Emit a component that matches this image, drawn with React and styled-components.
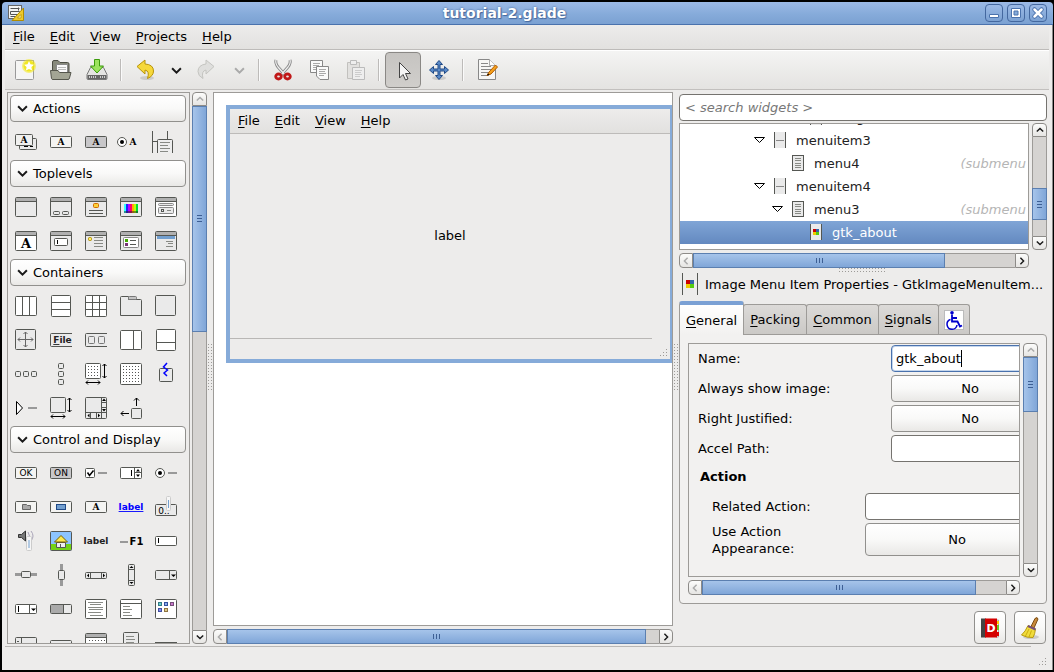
import React from 'react'
import styled, { createGlobalStyle, css } from 'styled-components';

const line = '#555753';
const face = '#eaeaea';

const Box = ({ x = 0.5, y = 1.5, w = 21, h = 19, fill = face, stroke = line, r = 1 }) => (
  <rect x={x} y={y} width={w} height={h} rx={r} fill={fill} stroke={stroke} />
)

const Win = ({ fill = face, children }) => (
  <>
    <Box fill={fill} />
    <path d='M1 3.5H21' stroke='#b0b0b0' strokeWidth='3' />
    <path d='M1 5.5H21' stroke={line} />
    {children}
  </>
)

const Lines = ({ d, stroke = '#888a85' }) => <path d={d} stroke={stroke} fill='none' />

const Word = ({ x = 11, y, size = 9, fill = '#000', serif, children, ...rest }) => (
  <text
    x={x}
    y={y}
    textAnchor='middle'
    fontFamily={serif ? '"DejaVu Serif", serif' : '"DejaVu Sans", sans-serif'}
    fontWeight='bold'
    fontSize={size}
    fill={fill}
    {...rest}>
    {children}
  </text>
)

const Pill = ({ fill = '#f4f4f2', children }) => (
  <>
    <Box y={5.5} h={11} fill={fill} />
    {children}
  </>
)

const Dots = ({ x, y, w, h }) => {
  const dots = [];
  for (let i = 0; i < w; i += 3) {
    for (let j = 0; j < h; j += 3) {
      dots.push(<rect key={i + '-' + j} x={x + i} y={y + j} width='1' height='1' fill='#555' />)
    }
  }
  return dots;
}

const squares = (list) => list.map(([x, y, w, h, fill]) => (
  <rect key={x + '-' + y} x={x} y={y} width={w} height={h} fill={fill} />
))

const groups = [
  {
    name: 'Actions',
    items: [
      ['Action Group', <><Box x={4.5} y={7.5} w={17} h={11} /><Lines d='M9 15.5h4M15 15.5h3' stroke='#000' /><Box y={3.5} w={17} h={11} fill='#f0f0ef' /><Word x={9} y={12} serif>A</Word></>],
      ['Action', <Pill><Word y={14} serif>A</Word></Pill>],
      ['Toggle Action', <Pill fill='#c8c7c9'><Word y={14} serif>A</Word></Pill>],
      ['Radio Action', <><circle cx='2' cy='11' r='4.5' fill='#fff' stroke={line} /><circle cx='2' cy='11' r='2' fill='#000' /><Word x={13} y={14} serif>A</Word></>],
      ['Recent Action', <><path d='M-2.500 0V22M12.500 0V8M-2 10.500H2' stroke={line} fill='none' /><path d='M2.500 22V9.500Q2.500 8.500 3.500 8.500H16.500Q17.500 8.500 17.500 9.500V22' fill='#eee' stroke={line} /><Lines d='M5 11.500h10M5 14.500h8M5 17.500h10M5 20.500h8' /></>],
    ],
  },
  {
    name: 'Toplevels',
    items: [
      ['Window', <Win />],
      ['Dialog', <Win><Box x={3.5} y={15.5} w={6} h={3} /><Box x={12.5} y={15.5} w={6} h={3} /></Win>],
      ['About Dialog', <Win><Box x={8.5} y={7.5} w={5} h={4} fill='#fcd23c' stroke='#d36b00' /><Lines d='M4 14.500h14M4 17.500h14' stroke={line} /></Win>],
      ['Color Dialog', <Win>{squares([[4, 8, 2, 9, '#3ff'], [6, 8, 2, 9, '#22f'], [8, 8, 2, 9, '#b0f'], [10, 8, 2, 9, '#f06'], [12, 8, 2, 9, '#fa0'], [14, 8, 2, 9, '#bf0'], [16, 8, 2, 9, '#0d3']])}<path d='M4 15h14v2H4z' fill='#222' fillOpacity='.5' /></Win>],
      ['File Dialog', <Win fill='#fff'><Box x={3.5} y={7.5} w={15} h={2} stroke='#888' /><Box x={3.5} y={11.5} w={15} h={6} stroke='#888' /><Box x={6.5} y={13.5} w={2} h={2} r={0} /><Lines d='M12 14.500h4' /></Win>],
      ['Font Dialog', <Win fill='#fff'><Word y={18} size={13} serif>A</Word></Win>],
      ['Input Dialog', <Win><Box x={4.5} y={8.5} w={13} h={7} fill='#fff' /><path d='M7.500 10v4' stroke='#000' /></Win>],
      ['Message Dialog', <Win><Box x={3.5} y={7.5} w={3} h={3} fill='#fe6' stroke='#b08c00' /><Lines d='M9 7.500h9M9 10.500h9M9 13.500h9M9 16.500h9' /></Win>],
      ['Recent Dialog', <Win><Box x={3.5} y={7.5} w={15} h={10} fill='#fff' stroke='#888' /><rect x='5' y='9' width='3' height='3' fill='#4a0' /><rect x='5' y='13' width='3' height='3' fill='#737' /><Lines d='M10 10.500h6M10 14.500h6' stroke={line} /></Win>],
      ['Assistant', <Win><rect x='2' y='6' width='18' height='3' fill='#729fcf' /><Lines d='M11 11.500h7M13 13.500h5M11 16.500h7' /></Win>],
    ],
  },
  {
    name: 'Containers',
    items: [
      ['Horizontal Box', <><Box fill='#fff' /><Lines d='M7.500 2V20M14.500 2V20' stroke={line} /></>],
      ['Vertical Box', <><Box x={1.5} y={0.5} w={19} h={21} fill='#fff' /><Lines d='M2 7.500H20M2 14.500H20' stroke={line} /></>],
      ['Table', <><Box y={0.5} h={21} fill='#fff' /><Lines d='M7.500 1V21M14.500 1V21M1 7.500H21M1 14.500H21' stroke={line} /></>],
      ['Notebook', <><path d='M.5 20.500V2.500Q.5 1.500 1.500 1.500H8.500V4.500H20.500Q21.500 4.500 21.500 5.500V20.500Z' fill={face} stroke={line} /><Box x={8.5} y={1.5} w={8} h={3} fill='#c4c4c4' stroke='#777' /></>],
      ['Frame', <Box y={0.5} w={20} h={20} />],
      ['Layout', <><Box w={20} y={0.5} h={20} /><path d='M10.500 3V18M3 10.500H18M8.500 5l2-2 2 2M8.500 16l2 2 2-2M5 8.500l-2 2 2 2M16 8.500l2 2-2 2' fill='none' stroke='#666' /></>],
      ['Menu Bar', <><path d='M22 4.500H1.500Q.5 4.500 .5 5.500V16.500Q.5 17.500 1.500 17.500H22' fill={face} stroke={line} /><Word x={12.5} y={14} size={9} fill='#222'><tspan textDecoration='underline'>F</tspan>ile</Word></>],
      ['Toolbar', <><path d='M22 4.500H1.500Q.5 4.500 .5 5.500V16.500Q.5 17.500 1.500 17.500H22' fill={face} stroke={line} /><Box x={3.5} y={7.5} w={6} h={7} stroke='#777' /><Box x={13.5} y={7.5} w={6} h={7} stroke='#777' /></>],
      ['Horizontal Panes', <><Box fill='#fff' /><Lines d='M13.500 2V20' stroke={line} /></>],
      ['Vertical Panes', <><Box x={1.5} y={0.5} w={19} h={21} fill='#fff' /><Lines d='M2 13.500H20' stroke={line} /></>],
      ['Horizontal Button Box', <><Box x={0.5} y={8.5} w={5} h={5} /><Box x={8.5} y={8.5} w={5} h={5} /><Box x={16.5} y={8.5} w={5} h={5} /></>],
      ['Vertical Button Box', <><Box x={8.5} y={0.5} w={5} h={5} /><Box x={8.5} y={8.5} w={5} h={5} /><Box x={8.5} y={16.5} w={5} h={5} /></>],
      ['Scrolled Layout', <><Box y={0.5} w={15} h={15} fill='#fff' /><Dots x={3} y={3} w={11} h={11} /><path d='M19.500 1V15M17.500 3l2-2 2 2M17.500 13l2 2 2-2M1 19.500H15M3 17.500l-2 2 2 2M13 17.500l2 2-2 2' fill='none' stroke='#000' /></>],
      ['Fixed', <><Box y={0.5} h={21} fill='#fff' /><Dots x={3} y={3} w={17} h={17} /></>],
      ['Event Box', <><Box x={4.5} y={5.5} w={13} h={13} /><path d='M12 0l-3.500 4 4 3-3.500 3 3 3' fill='none' stroke='#00f' strokeWidth='1.5' /></>],
      ['Expander', <><path d='M1.500 4.500V17.500L7.500 11Z' fill='#fff' stroke='#000' /><path d='M13 11h9' stroke='#999' strokeWidth='2' /></>],
      ['Viewport', <><Box y={0.5} w={15} h={15} /><path d='M19.500 1V15M17.500 3l2-2 2 2M17.500 13l2 2 2-2M1 19.500H15M3 17.500l-2 2 2 2M13 17.500l2 2-2 2' fill='none' stroke='#000' /></>],
      ['Scrolled Window', <><Box y={0.5} h={21} /><Lines d='M16.500 1V21M1 15.500H21M16 5.500h5M16 10.500h5M5.500 16v5M11.500 16v5' stroke={line} /><path d='M17 4h4l-2-2.500zM17 12h4l-2 2.500zM4.500 16.500v4l-2-2zM13 16.500v4l2-2z' fill='#000' /></>],
      ['Alignment', <><Box x={11.5} y={11.5} w={10} h={10} /><path d='M16.500 9V1M14 3.500l2.500-2.500 2.500 2.500M9 16.500H1M3.500 14l-2.500 2.500 2.500 2.500' fill='none' stroke='#000' /></>],
    ],
  },
  {
    name: 'Control and Display',
    items: [
      ['Button', <Pill><Word y={14} size={9} fontWeight='normal'>OK</Word></Pill>],
      ['Toggle Button', <Pill fill='#c8c7c9'><Word y={14} size={9} fontWeight='normal'>ON</Word></Pill>],
      ['Check Button', <><Box y={6.5} w={9} h={9} fill='#fff' /><path d='M2.500 10.500l2 3 4-5' fill='none' stroke='#000' strokeWidth='1.5' /><path d='M13 11h9' stroke='#999' strokeWidth='2' /></>],
      ['Spin Button', <><Box y={5.5} h={11} fill='#fff' /><path d='M11.500 8v6' stroke='#000' /><Lines d='M14.500 6v10M15 10.500h6' stroke={line} /><path d='M16 9.500h4l-2-2.500zM16 12.500h4l-2 2.500z' fill='#000' /></>],
      ['Radio Button', <><circle cx='5' cy='11' r='4.5' fill='#fff' stroke={line} /><circle cx='5' cy='11' r='2' fill='#000' /><path d='M13 11h9' stroke='#999' strokeWidth='2' /></>],
      ['File Chooser Button', <Pill><path d='M7.500 13.500V8.500h4l1 1h3v4z' fill='#aaa' stroke='#666' /></Pill>],
      ['Color Button', <Pill><Box x={6.5} y={8.5} w={9} h={5} r={0} fill='#729fcf' stroke='#204a87' /></Pill>],
      ['Font Button', <Pill><Word y={14} serif>A</Word></Pill>],
      ['Link Button', <Word y={14} size={9} fill='#00f' textDecoration='underline'>label</Word>],
      ['Scale Button', <><Box y={8.5} h={11} /><Word x={9} y={18} size={9} fontWeight='normal'>0..</Word><Box x={11.5} y={0.5} w={4} h={14} fill='#f6f6f6' stroke='#ccc' /><path d='M13.500 4v8' stroke='#729fcf' /></>],
      ['Volume Button', <><path d='M3.500 4.500h3l4-3.500v10l-4-3.500h-3z' fill='#777' stroke='#333' /><path d='M13 2q3 4 0 8M16 1q4 5 0 10' fill='none' stroke='#a9a4b8' /><Box x={11.5} y={6.5} w={5} h={14} fill='#f6f6f6' stroke='#ccc' /><path d='M14 10v8' stroke='#729fcf' /></>],
      ['Image', <><Box fill='#8cc4ff' h={19} /><path d='M1 14H21V20H1z' fill='#73d216' /><path d='M6.500 12.500h9v5h-9z' fill='#eee' stroke={line} /><path d='M4.500 12L11 5.500 17.500 12z' fill='#fce94f' stroke='#776000' /><path d='M10.500 14v4' stroke={line} /></>],
      ['Label', <Word y={14} size={9} fill='#222'>label</Word>],
      ['Accelerator Label', <><path d='M0 12h8' stroke='#999' strokeWidth='2' /><Word x={16.5} y={15} size={10}>F1</Word></>],
      ['Text Entry', <><Box y={6.5} h={9} fill='#fff' /><path d='M3.500 8v5' stroke='#000' /></>],
      ['Horizontal Scale', <><path d='M0 10.500h22' stroke='#999' strokeWidth='3' /><Box x={6.5} y={7.5} w={9} h={6} /></>],
      ['Vertical Scale', <><path d='M11.500 0v22' stroke='#999' strokeWidth='3' /><Box x={8.5} y={6.5} w={6} h={9} /></>],
      ['Horizontal Scrollbar', <><Box y={8.5} h={6} /><Lines d='M5.500 9v6M16.500 9v6' stroke={line} /><path d='M4 9.500v4l-2-2zM18 9.500v4l2-2z' fill='#000' /></>],
      ['Vertical Scrollbar', <><Box x={8.5} y={0.5} w={6} h={21} /><Lines d='M9 5.500h6M9 16.500h6' stroke={line} /><path d='M9.500 4h4l-2-2zM9.500 18h4l-2 2z' fill='#000' /></>],
      ['Combo Box', <><Box y={6.5} h={9} /><Lines d='M14.500 7v9' stroke={line} /><path d='M16 10.500h5l-2.500 2.500z' fill='#000' /></>],
      ['Combo Box Entry', <><Box y={6.5} h={9} fill='#fff' /><path d='M3.500 8v6' stroke='#000' /><Lines d='M14.500 7v9' stroke={line} /><path d='M16 10.500h5l-2.500 2.500z' fill='#000' /></>],
      ['Progress Bar', <><Box y={6.5} h={9} /><path d='M1 7h12v8H1z' fill='#aaa' /><Lines d='M13.500 7v9' stroke={line} /></>],
      ['Text View', <><Box fill='#fff' /><Lines d='M3 4.500h15M5 6.500h11M3 9.500h15M4 11.500h14M3 14.500h13M5 17.500h13' /></>],
      ['Tree View', <><Box fill='#fff' /><Lines d='M1 5.500h20' stroke={line} /><Lines d='M3 8.500h7M3 11.500h9M3 14.500h7M3 17.500h9' /></>],
      ['Icon View', <><Box fill='#fff' />{squares([[3, 4, 4, 4, '#367c85'], [9, 4, 4, 4, '#34509c'], [15, 4, 4, 4, '#75507b'], [3, 10, 4, 4, '#4150a0'], [9, 10, 4, 4, '#8f7341'], [4, 5, 2, 2, '#6cc'], [10, 5, 2, 2, '#8ae'], [16, 5, 2, 2, '#c7c'], [4, 11, 2, 2, '#88e'], [10, 11, 2, 2, '#dc8']])}</>],
      ['Handle Box', <><Box y={5.5} h={16} /><Lines d='M6.500 6v16M2 9.500h2' stroke={line} /></>],
      ['Status Bar', <Box y={8.5} h={13} />],
      ['Calendar', <><Win fill='#fff' /><Dots x={4} y={8} w={16} h={12} /></>],
      ['Popup Menu', <><Box x={3.5} y={0.5} w={15} h={22} /><Lines d='M6 4.500h8M6 7.500h9M6 10.500h8' /></>],
      ['Separator', <path d='M0 10.500h22' stroke={line} />],
    ],
  },
];

const tree = [
  { name: 'imagemenuitem5', depth: 3, icon: 'image' },
  { name: 'menuitem3', depth: 1, icon: 'item', open: true },
  { name: 'menu4', depth: 2, icon: 'menu', note: '(submenu' },
  { name: 'menuitem4', depth: 1, icon: 'item', open: true },
  { name: 'menu3', depth: 2, icon: 'menu', open: true, note: '(submenu' },
  { name: 'gtk_about', depth: 3, icon: 'image', selected: true },
];

function TreeIcon({ type }) {
  return (
    <svg width='12' height='16' viewBox='0 0 12 16' shapeRendering='crispEdges'>
      {type === 'menu'
        ? <>
          <Box w={11} y={0.5} h={15} />
          <Lines d='M3 3.500h6M3 5.500h6M3 8.500h6M3 10.500h6M3 12.500h6' />
        </>
        : <>
          <rect width='12' height='16' fill={face} />
          <path d='M.5 0v16M11.500 0v16' stroke={line} />
          {type === 'item' && <path d='M2 8h8' stroke='#888' />}
          {type === 'image' && squares([[3, 5, 3, 3, '#c00'], [6, 5, 3, 3, '#36a'], [3, 8, 3, 3, '#ec0'], [6, 8, 3, 3, '#5c1']])}
        </>}
    </svg>
  )
}

const arrows = {
  up: 'M1 7l4-4 4 4',
  down: 'M1 3l4 4 4-4',
  left: 'M7 1L3 5l4 4',
  right: 'M3 1l4 4-4 4',
};

const Arrow = ({ dir, dim, size = 8 }) => (
  <svg width={size} height={size} viewBox='0 0 10 10'>
    <path d={arrows[dir]} fill='none' stroke={dim ? '#aaa' : '#1a1a1a'} strokeWidth='1.8' />
  </svg>
)

function Scrollbar({ vertical, before = 0, thumb, after, atStart }) {
  return (
    <Bar $vertical={vertical}>
      <BarButton $vertical={vertical} $first aria-label={vertical ? 'Scroll up' : 'Scroll left'}>
        <Arrow dir={vertical ? 'up' : 'left'} dim={atStart} />
      </BarButton>
      <Trough $vertical={vertical} $grow={before} />
      <Thumb $vertical={vertical} $grow={thumb}><i /><i /><i /></Thumb>
      <Trough $vertical={vertical} $grow={after} />
      <BarButton $vertical={vertical} aria-label={vertical ? 'Scroll down' : 'Scroll right'}>
        <Arrow dir={vertical ? 'down' : 'right'} />
      </BarButton>
    </Bar>
  )
}

const tools = {
  New: <><path d='M2.500 3.500Q2.500 2.500 3.500 2.500H20.500V20.500Q20.500 21.500 19.500 21.500H3.500Q2.500 21.500 2.500 20.500Z' fill='#f5f5f4' stroke='#999' /><circle cx='16' cy='8' r='7' fill='#f4ea1a' fillOpacity='.55' /><circle cx='16' cy='8' r='5.500' fill='#f0e400' fillOpacity='.7' /><path d='M16 3l1.500 3.300 3.500.4-2.600 2.400.7 3.500L16 10.900l-3.100 1.700.7-3.500L11 6.700l3.500-.4z' fill='#fff' /></>,
  Open: <><path d='M3.500 19V4Q3.500 2.500 5 2.500H9L11 4.500H18.500Q20 4.500 20 6V19' fill='#888a7c' stroke='#4c4d44' /><path d='M7.500 6.500H18.500V17H7.500z' fill='#fafafa' stroke='#888' /><path d='M9 9.500h8M9 11.500h8' stroke='#bbb' /><path d='M1.500 12.500H9L10.500 14.500H22L20.500 20Q20.300 21.500 19 21.500H4Q2.800 21.500 2.500 20.500Z' fill='#a3a594' stroke='#55564c' /></>,
  Save: <><path d='M5.500 9.500H18.500L22 16.500V20.500Q22 21.500 21 21.500H3Q2 21.500 2 20.500V16.500Z' fill='#e4e4e2' stroke='#777' /><path d='M2.500 17H21.500V21H2.500z' fill='#666' /><path d='M4 19h8M15 19h5' stroke='#ccc' strokeDasharray='1 1' strokeWidth='2' /><path d='M9.500 1.500H14.500V8H18.500L12 15 5.500 8H9.500Z' fill='#9be35c' stroke='#3b9a0a' /></>,
  Undo: <><ellipse cx='14' cy='20' rx='7' ry='2' fill='#000' fillOpacity='.12' /><path d='M4 8.500L12 2V6Q20.500 6.500 20.500 13 20.500 18 14.500 20.500 17 13 12 12V16Z' fill='#f6d83a' stroke='#b8930a' /></>,
  Redo: <><path d='M18 8.500L10 2V6Q2 7 2 13.500 2 18 7 20.500 5 13 10 12V16Z' fill='#dfdfdd' stroke='#c4c4c0' /></>,
  Cut: <><path d='M5 2Q4 5 7 9L14 17M19 2Q20 5 17 9L10 17' fill='none' stroke='#888' strokeWidth='3' /><path d='M5 2Q4 5 7 9L14 17M19 2Q20 5 17 9L10 17' fill='none' stroke='#eee' strokeWidth='1.200' /><ellipse cx='7.500' cy='18.500' rx='2.800' ry='2.500' fill='none' stroke='#c01818' strokeWidth='2.800' /><ellipse cx='16.500' cy='18.500' rx='2.800' ry='2.500' fill='none' stroke='#c01818' strokeWidth='2.800' /></>,
  Copy: <><path d='M3.500 2.500H15.500V14.500H3.500z' fill='#fafafa' stroke='#888' /><path d='M6 5.500h7M6 7.500h6M6 9.500h7M6 11.500h5' stroke='#aaa' /><path d='M9.500 8.500H21.500V21.500H13L9.500 18z' fill='#fafafa' stroke='#888' /><path d='M12 11.500h7M12 13.500h6M12 15.500h7M12 17.500h5' stroke='#aaa' /></>,
  Paste: <><path d='M4.500 4.500H16.500V20.500H4.500z' fill='#e2e1df' stroke='#c2c1be' /><path d='M7.500 2.500h6v4h-6z' fill='#eee' stroke='#bbb' /><path d='M9.500 9.500H21.500V21.500H9.500z' fill='#eee' stroke='#bbb' /><path d='M12 12.500h7M12 14.500h6M12 16.500h7M12 18.500h5' stroke='#ccc' /></>,
  Select: <path d='M8.500 4.500V20L12 16.500 14.500 22 17 21 14.500 15.500H19.500Z' fill='#f4f4f4' stroke='#444' />,
  Drag: <><ellipse cx='12' cy='20' rx='7' ry='2' fill='#000' fillOpacity='.12' /><path d='M12 2.500L15.500 6.500H13V11H17.500V8.500L21.500 12 17.500 15.500V13H13V17.500H15.500L12 21.500 8.500 17.500H11V13H6.500V15.500L2.500 12 6.500 8.500V11H11V6.500H8.500Z' fill='#5a8ac8' stroke='#204a87' /></>,
  Edit: <><path d='M3.500 1.500H14.500L20.500 7.500V21.500H3.500z' fill='#f6f6f5' stroke='#888' /><path d='M14.500 1.500V7.500H20.500' fill='#fff' stroke='#aaa' /><path d='M6 5.500h7M6 8.500h10M6 11.500h11M6 14.500h8M6 17.500h8' stroke='#888' /><path d='M12 17.500l2-3.500L20.500 7l2 2-6.500 7z' fill='#f5a11c' stroke='#b35c00' /><path d='M12 17.500l1-2 1.500 1z' fill='#000' /></>,
};

function Tool({ name, active }) {
  return (
    <ToolButton $active={active} aria-label={name}>
      <svg width='24' height='24' viewBox='0 0 24 24'>{tools[name]}</svg>
    </ToolButton>
  )
}

const Menu = ({ items }) => items.map((item) => (
  <MenuItem key={item}><u>{item[0]}</u>{item.slice(1)}</MenuItem>
))

function Palette() {
  return (
    <PaletteArea>
      <PaletteList>
        {groups.map((group) => (
          <React.Fragment key={group.name}>
            <GroupButton><Arrow dir='down' size={11} />{group.name}</GroupButton>
            <IconGrid>
              {group.items.map(([label, art]) => (
                <IconButton key={label} aria-label={label}>
                  <svg width='22' height='22' viewBox='0 0 22 22' overflow='visible'>{art}</svg>
                </IconButton>
              ))}
            </IconGrid>
          </React.Fragment>
        ))}
      </PaletteList>
      <Scrollbar vertical thumb={225} after={300} atStart />
    </PaletteArea>
  )
}

function Designer() {
  return (
    <DesignArea>
      <Canvas>
        <Preview>
          <MenuBar><Menu items={['File', 'Edit', 'View', 'Help']} /></MenuBar>
          <PreviewBody>label</PreviewBody>
          <PreviewStatus><Resize /></PreviewStatus>
        </Preview>
      </Canvas>
      <Scrollbar thumb={418} after={13} atStart />
    </DesignArea>
  )
}

function Inspector() {
  return (
    <ScrollGrid $fixed>
      <TreeList>
        {tree.map((row) => (
          <TreeRow key={row.name} $depth={row.depth} $selected={row.selected}>
            <svg width='13' height='8' viewBox='0 0 13 8'>
              {row.open && <path d='M1.500 1.500H11.500L6.500 6.500Z' fill='#fff' stroke='#000' />}
            </svg>
            <TreeIcon type={row.icon} />
            <span>{row.name}</span>
            {row.note && <em>{row.note}</em>}
          </TreeRow>
        ))}
      </TreeList>
      <Scrollbar vertical before={51} thumb={30} after={16} />
      <Scrollbar thumb={252} after={70} atStart />
    </ScrollGrid>
  )
}

function Properties() {
  return (
    <Notebook>
      <Tabs role='tablist'>
        <Tab role='tab' $selected aria-selected='true'><u>G</u>eneral</Tab>
        <Tab role='tab'><u>P</u>acking</Tab>
        <Tab role='tab'><u>C</u>ommon</Tab>
        <Tab role='tab'><u>S</u>ignals</Tab>
        <Tab role='tab' aria-label='Accessibility'>
          <svg width='20' height='20' viewBox='0 0 20 20'>
            <rect x='.5' y='.5' width='19' height='19' fill='#fff' stroke='#bbb' />
            <circle cx='8' cy='2.800' r='1.800' fill='#00c' />
            <path d='M8 4.500V11.500H13.500L16 16.500 18 15.500M8 8H13' fill='none' stroke='#00c' strokeWidth='1.800' />
            <path d='M6.500 9.500A5 5 0 1 0 13 15' fill='none' stroke='#00c' strokeWidth='1.500' />
          </svg>
        </Tab>
      </Tabs>
      <Page>
        <ScrollGrid>
          <FormView>
            <Form>
              <Field><label htmlFor='name'>Name:</label><Entry id='name' $focused defaultValue='gtk_about' /></Field>
              <Field><label htmlFor='show'>Always show image:</label><Toggle id='show'>No</Toggle></Field>
              <Field><label htmlFor='right'>Right Justified:</label><Toggle id='right'>No</Toggle></Field>
              <Field><label htmlFor='accel'>Accel Path:</label><Entry id='accel' /></Field>
              <Heading>Action</Heading>
              <Field $nested><label htmlFor='related'>Related Action:</label><Entry id='related' /></Field>
              <Field $nested $tall>
                <label htmlFor='appearance'>Use Action Appearance:</label>
                <Toggle id='appearance'>No</Toggle>
              </Field>
            </Form>
          </FormView>
          <Scrollbar vertical thumb={54} after={152} atStart />
          <Scrollbar thumb={273} after={30} atStart />
        </ScrollGrid>
      </Page>
    </Notebook>
  )
}

function App() {
  return (
    <>
      <Global />
      <Frame>
        <TitleBar>
          <svg width='16' height='16' viewBox='0 0 16 16'>
            <rect x='.5' y='.5' width='13' height='13' fill='#f4f4f2' stroke='#666' />
            <path d='M2.500 3.500h9M2.500 6.500h9v3h-9zM2.500 11.500h5M10.500 2.500v3' fill='none' stroke='#555' />
            <path d='M15.500 3V15.500H4z' fill='#edc92c' stroke='#b08c00' />
            <path d='M13 9.500V13H9.500z' fill='#fff3b0' stroke='#b08c00' strokeWidth='.7' />
          </svg>
          <h1>tutorial-2.glade</h1>
          <WindowButton aria-label='Minimize'>
            <svg width='16' height='16' viewBox='0 0 16 16'><path d='M3.500 9.500h9v3h-9z' fill='#fff' stroke='#4a72ad' /></svg>
          </WindowButton>
          <WindowButton aria-label='Maximize'>
            <svg width='16' height='16' viewBox='0 0 16 16'><path d='M3.500 3.500h9v9h-9z' fill='#fff' stroke='#4a72ad' /><path d='M6 6h4v4h-4z' fill='#86abd9' stroke='#4a72ad' /></svg>
          </WindowButton>
          <WindowButton aria-label='Close'>
            <svg width='16' height='16' viewBox='0 0 16 16'><path d='M4.500 4.500l7 7M11.500 4.500l-7 7' stroke='#4a72ad' strokeWidth='4.500' strokeLinecap='round' /><path d='M4.500 4.500l7 7M11.500 4.500l-7 7' stroke='#fff' strokeWidth='2.500' strokeLinecap='round' /></svg>
          </WindowButton>
        </TitleBar>
        <Client>
          <MenuBar><Menu items={['File', 'Edit', 'View', 'Projects', 'Help']} /></MenuBar>
          <ToolBar>
            <Tool name='New' />
            <Tool name='Open' />
            <Tool name='Save' />
            <Divider />
            <Tool name='Undo' />
            <DropButton aria-label='Undo history'><Arrow dir='down' size={11} /></DropButton>
            <Tool name='Redo' />
            <DropButton aria-label='Redo history'><Arrow dir='down' size={11} dim /></DropButton>
            <Divider />
            <Tool name='Cut' />
            <Tool name='Copy' />
            <Tool name='Paste' />
            <Divider />
            <Tool name='Select' active />
            <Tool name='Drag' />
            <Divider />
            <Tool name='Edit' />
          </ToolBar>
          <Workspace>
            <Palette />
            <Sash><Grip /></Sash>
            <Designer />
            <Sash><Grip /></Sash>
            <Side>
              <Search aria-label='Search widgets' placeholder='< search widgets >' />
              <Inspector />
              <Sash $flat><Grip $flat /></Sash>
              <EditorTitle>
                <svg width='17' height='22' viewBox='0 0 17 22' shapeRendering='crispEdges'>
                  <path d='M.5 0v22M15.500 0v22' stroke={line} />
                  {squares([[4, 7, 4, 4, '#c00'], [8, 7, 4, 4, '#36a'], [4, 11, 4, 4, '#ec0'], [8, 11, 4, 4, '#5c1']])}
                </svg>
                <h2>Image Menu Item Properties - GtkImageMenuItem...</h2>
              </EditorTitle>
              <Properties />
              <SideActions>
                <SquareButton aria-label='Documentation'>
                  <svg width='20' height='22' viewBox='0 0 20 22'>
                    <path d='M16 3h2.500v17H16z' fill='#eee' stroke='#aaa' />
                    <path d='M17 4h2v3h-2z' fill='#fc0' /><path d='M17 8h2v5h-2z' fill='#6c2' /><path d='M17 15h2v4h-2z' fill='#d00' />
                    <path d='M1 1.500h5v19H1z' fill='#444' />
                    <path d='M5 1.500h12v19H5z' fill='#d40000' />
                    <text x='11' y='15' textAnchor='middle' fontFamily='"DejaVu Sans", sans-serif' fontWeight='bold' fontSize='11' fill='#fff'>D</text>
                  </svg>
                </SquareButton>
                <SquareButton aria-label='Reset'>
                  <svg width='22' height='24' viewBox='0 0 22 24'>
                    <ellipse cx='12' cy='21' rx='8' ry='2' fill='#000' fillOpacity='.15' />
                    <path d='M16 2.500Q18.500 .5 19 3L15 12 12 10.500Z' fill='#c98a3a' stroke='#7a4c12' />
                    <path d='M9 9.500L16.500 13Q16 18 14 21.500 8 22 2.500 19 6.500 15.500 9 9.500Z' fill='#f0dc3c' stroke='#b89a10' />
                    <path d='M9 10l7.500 3.500' stroke='#75507b' strokeWidth='2' />
                    <path d='M10 13l-3.500 7M12.500 14.500L10 21' stroke='#c4a000' strokeWidth='.8' />
                  </svg>
                </SquareButton>
              </SideActions>
            </Side>
          </Workspace>
          <StatusBar><Resize /></StatusBar>
        </Client>
      </Frame>
    </>
  )
}

const Global = createGlobalStyle`
* { box-sizing: border-box; }
body {
  margin: 0;
  background: #000;
}
body, button, input {
  font-family: "DejaVu Sans", sans-serif;
  font-size: 13px;
  color: #000;
}
h1, h2 { margin: 0; }
svg {
  display: block;
  flex: none;
}
u { text-underline-offset: 2px; }
`;

const Frame = styled.div`
display: flex;
flex-direction: column;
height: 100vh;
border: 2px solid #000;
border-right-width: 1px;
`;

const TitleBar = styled.header`
display: flex;
align-items: center;
gap: 4px;
flex: none;
height: 23px;
padding: 0 6px;
border-radius: 4px 4px 0 0;
border-bottom: 1px solid #4a72ad;
background: linear-gradient(#9cbae6, #86abda 55%, #7ba1d2);
h1 {
  flex: 1;
  font-size: 14px;
  text-align: center;
  color: #fff;
  text-shadow: 0 0 2px #35568c, 1px 1px 1px #4a6fa5;
}
`;

const WindowButton = styled.button`
width: 18px;
height: 18px;
padding: 0;
border: 1px solid #44689f;
border-radius: 4px;
background: linear-gradient(#9cbae6, #7ba1d2);
`;

const Client = styled.div`
display: flex;
flex-direction: column;
flex: 1;
min-height: 0;
padding: 0 3px;
background: #edeceb;
border-right: 1px solid #8a8988;
`;

const MenuBar = styled.nav`
display: flex;
flex: none;
gap: 1px;
height: 25px;
padding: 0 1px;
border-bottom: 1px solid #bdbbb9;
background: linear-gradient(#edeceb, #e2e1df);
`;

const MenuItem = styled.button`
padding: 0 7px 1px;
border: 0;
background: none;
`;

const ToolBar = styled.div`
display: flex;
align-items: center;
flex: none;
height: 40px;
padding: 0 2px;
border-top: 1px solid #fff;
border-bottom: 1px solid #c2c0be;
background: linear-gradient(#f4f4f3, #e4e3e1);
`;

const ToolButton = styled.button`
display: flex;
align-items: center;
justify-content: center;
width: 36px;
height: 36px;
padding: 0;
border: 1px solid transparent;
border-radius: 4px;
background: none;
${({ $active }) => $active && css`
  border-color: #8a8885;
  background: linear-gradient(#c6c4c1, #d0cecb);
`}
`;

const DropButton = styled.button`
display: flex;
align-items: center;
justify-content: center;
width: 27px;
height: 34px;
padding: 0;
border: 0;
background: none;
`;

const Divider = styled.div`
width: 2px;
height: 22px;
margin: 0 5px;
border-left: 1px solid #bdbbb9;
border-right: 1px solid #fafafa;
`;

const Workspace = styled.main`
display: flex;
flex: 1;
min-height: 0;
padding: 2px;
`;

const PaletteArea = styled.section`
display: flex;
gap: 2px;
flex: none;
`;

const PaletteList = styled.div`
width: 183px;
overflow: hidden;
padding: 2px 3px 0 2px;
border: 1px solid #9d9b98;
`;

const raised = css`
border: 1px solid #91908d;
border-radius: 4px;
background: linear-gradient(#fff, #f9f9f8 50%, #e9e8e6);
`;

const GroupButton = styled.button`
display: flex;
align-items: center;
gap: 5px;
width: 100%;
height: 27px;
padding: 0 6px 1px;
${raised}
`;

const IconGrid = styled.div`
display: grid;
grid-template-columns: repeat(5, 22px);
gap: 12px 13px;
padding: 9px 5px 7px;
`;

const IconButton = styled.button`
width: 22px;
height: 22px;
padding: 0;
border: 0;
background: none;
`;

const dotted = css`
background: conic-gradient(at 1px 1px, transparent 270deg, #9d9b98 0) 0 0 / 3px 3px;
`;

const Sash = styled.div`
display: flex;
align-items: center;
justify-content: center;
flex: none;
${({ $flat }) => $flat ? 'height: 5px;' : 'width: 6px;'}
`;

const Grip = styled.div`
width: ${({ $flat }) => $flat ? '48px' : '5px'};
height: ${({ $flat }) => $flat ? '5px' : '48px'};
${dotted}
`;

const Bar = styled.div`
display: flex;
flex: none;
flex-direction: ${({ $vertical }) => $vertical ? 'column' : 'row'};
${({ $vertical }) => $vertical ? 'width' : 'height'}: 15px;
min-width: 0;
min-height: 0;
`;

const BarButton = styled.button`
display: flex;
align-items: center;
justify-content: center;
flex: none;
width: ${({ $vertical }) => $vertical ? '15px' : '14px'};
height: ${({ $vertical }) => $vertical ? '14px' : '15px'};
padding: 0;
border: 1px solid #8d8b88;
border-radius: ${({ $vertical, $first }) => $first
    ? ($vertical ? '4px 4px 0 0' : '4px 0 0 4px')
    : ($vertical ? '0 0 4px 4px' : '0 4px 4px 0')};
background: linear-gradient(#fcfcfb, #e6e5e3);
`;

const Trough = styled.div`
flex: ${({ $grow }) => $grow} 1 0;
border: solid #9d9b98;
border-width: ${({ $vertical }) => $vertical ? '0 1px' : '1px 0'};
background: #d5d3d1;
`;

const Thumb = styled.div`
display: flex;
flex: ${({ $grow }) => $grow} 1 0;
flex-direction: ${({ $vertical }) => $vertical ? 'column' : 'row'};
align-items: center;
justify-content: center;
gap: 2px;
border: 1px solid #5b7fb0;
background: linear-gradient(${({ $vertical }) => $vertical ? 'to right' : 'to bottom'}, #a6c4ea, #80a6d8);
i {
  width: ${({ $vertical }) => $vertical ? '5px' : '1px'};
  height: ${({ $vertical }) => $vertical ? '1px' : '5px'};
  background: #3d5f94;
}
`;

const DesignArea = styled.section`
display: flex;
flex-direction: column;
gap: 3px;
flex: 1;
min-width: 0;
`;

const Canvas = styled.div`
flex: 1;
overflow: hidden;
padding: 12px;
border: 1px solid #9d9b98;
background: #fff;
`;

const Preview = styled.div`
display: flex;
flex-direction: column;
width: 448px;
height: 258px;
border: 4px solid #86abd9;
background: #edeceb;
`;

const PreviewBody = styled.div`
display: flex;
align-items: center;
justify-content: center;
flex: 1;
padding-bottom: 2px;
`;

const Resize = styled.div`
align-self: flex-end;
width: 12px;
height: 12px;
clip-path: polygon(100% 0, 100% 100%, 0 100%);
${dotted}
`;

const PreviewStatus = styled.div`
display: flex;
justify-content: flex-end;
height: 21px;
padding: 0 1px 1px 0;
background: linear-gradient(#b9b7b5, #b9b7b5) no-repeat 0 0 / calc(100% - 18px) 1px;
`;

const StatusBar = styled.footer`
display: flex;
justify-content: flex-end;
flex: none;
height: 24px;
padding: 0 1px 3px 0;
background: linear-gradient(#b9b7b5, #b9b7b5) no-repeat 0 0 / calc(100% - 18px) 1px;
`;

const Side = styled.aside`
display: flex;
flex-direction: column;
flex: none;
width: 368px;
padding-top: 2px;
`;

const Search = styled.input`
height: 27px;
margin-bottom: 2px;
padding: 0 5px 1px;
border: 1px solid #75736f;
border-radius: 4px;
background: #fff;
&::placeholder {
  font-style: italic;
  color: #777;
}
`;

const ScrollGrid = styled.div`
display: grid;
grid-template-columns: minmax(0, 1fr) 15px;
grid-template-rows: minmax(0, 1fr) 15px;
gap: 3px;
flex: ${({ $fixed }) => $fixed ? 'none' : '1'};
min-height: 0;
`;

const TreeList = styled.div`
display: flex;
flex-direction: column;
justify-content: flex-end;
height: 127px;
overflow: hidden;
padding-bottom: 5px;
border: 1px solid #9d9b98;
background: #fff;
`;

const TreeRow = styled.div`
display: flex;
align-items: center;
flex: none;
gap: 8px;
height: 23px;
padding: 0 2px 1px ${({ $depth }) => 55 + $depth * 18}px;
color: ${({ $selected }) => $selected ? '#fff' : '#222'};
background: ${({ $selected }) => $selected ? 'linear-gradient(#80a5d6, #6389c0)' : 'none'};
span { margin-left: 2px; }
em {
  margin-left: auto;
  color: #b5b5b5;
}
`;

const EditorTitle = styled.div`
display: flex;
align-items: center;
gap: 6px;
flex: none;
height: 22px;
padding-left: 3px;
h2 {
  font-size: 13px;
  font-weight: normal;
  white-space: nowrap;
}
`;

const Notebook = styled.section`
display: flex;
flex-direction: column;
flex: 1;
min-height: 0;
margin-top: 6px;
`;

const Tabs = styled.div`
display: flex;
align-items: flex-end;
height: 33px;
`;

const Tab = styled.button`
height: 30px;
margin-left: -1px;
padding: 0 6px;
border: 1px solid #9d9b98;
border-bottom: 0;
border-radius: 3px 3px 0 0;
background: linear-gradient(#dcdad8, #cbc9c6);
${({ $selected }) => $selected && css`
  position: relative;
  height: 34px;
  margin: 0 0 -1px;
  border-top: 4px solid #7aa0d4;
  background: linear-gradient(#fff, #f2f1f0);
`}
&:last-child { padding: 0 5px; }
`;

const Page = styled.div`
display: flex;
flex: 1;
min-height: 0;
padding: 8px;
border: 1px solid #9d9b98;
border-radius: 0 4px 4px 4px;
background: #f2f1f0;
`;

const FormView = styled.div`
overflow: hidden;
border: 1px solid #9d9b98;
`;

const Form = styled.form`
display: flex;
flex-direction: column;
gap: 3px;
width: 360px;
padding: 1px 0 0 9px;
`;

const Field = styled.div`
display: grid;
align-items: center;
grid-template-columns: minmax(0, 1fr) ${({ $nested }) => $nested ? '184px' : '158px'};
grid-auto-rows: ${({ $tall }) => $tall ? '33px' : '27px'};
padding-left: ${({ $nested }) => $nested ? '14px' : '0'};
label {
  width: ${({ $tall }) => $tall ? '110px' : 'auto'};
  line-height: 17px;
}
`;

const Heading = styled.strong`
height: 25px;
padding-left: 2px;
line-height: 24px;
`;

const Entry = styled.input`
width: 100%;
height: 100%;
padding: 0 4px;
border: 1px solid #75736f;
border-radius: 4px;
background: #fff;
${({ $focused }) => $focused && css`
  border-color: #4a72ad;
  box-shadow: inset 0 0 0 1px #c5d6ec;
  background: linear-gradient(#000, #000) no-repeat 69px center / 1px 17px #fff;
`}
`;

const Toggle = styled.button.attrs({ type: 'button' })`
height: 100%;
${raised}
`;

const SideActions = styled.div`
display: flex;
justify-content: flex-end;
gap: 8px;
flex: none;
padding: 7px 1px 0 0;
`;

const SquareButton = styled.button`
display: flex;
align-items: center;
justify-content: center;
width: 32px;
height: 33px;
padding: 0;
${raised}
`;

export default App
